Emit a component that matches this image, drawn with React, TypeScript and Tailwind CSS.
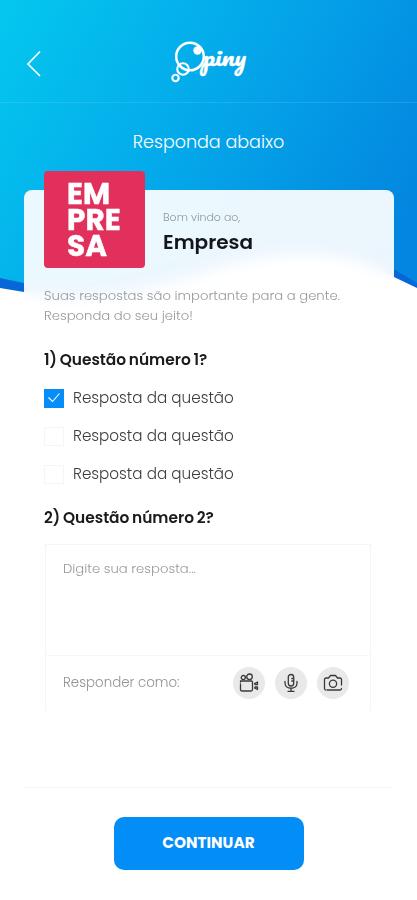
import React, { useState } from "react";

const answers = [
  { id: "a", label: "Resposta da questão" },
  { id: "b", label: "Resposta da questão" },
  { id: "c", label: "Resposta da questão" },
];

function HeroBackground() {
  return (
    <svg
      className="absolute inset-x-0 top-0 w-full h-[300px]"
      viewBox="0 0 417 300"
      preserveAspectRatio="none"
      aria-hidden="true"
    >
      <defs>
        <linearGradient
          id="sky"
          x1="0"
          y1="0"
          x2="400"
          y2="230"
          gradientUnits="userSpaceOnUse"
        >
          <stop offset="0" stopColor="#04c8ef" />
          <stop offset="0.5" stopColor="#04a8ea" />
          <stop offset="1" stopColor="#0386e0" />
        </linearGradient>
      </defs>
      <path
        d="M0 0H417V288L394 277C345 248 290 247 225 265C160 285 90 306 24 292L0 288Z"
        fill="#0567d8"
      />
      <path
        d="M0 0H417V283L394 269C345 244 290 240 225 259C160 277 90 298 24 283L0 278Z"
        fill="url(#sky)"
      />
    </svg>
  );
}

function Logo() {
  return (
    <svg
      className="w-20 h-11"
      viewBox="0 0 80 44"
      fill="none"
      stroke="white"
      role="img"
      aria-label="Opiny"
    >
      <circle cx="21" cy="16.5" r="13.8" strokeWidth="2.5" />
      <circle cx="14" cy="29" r="5.8" strokeWidth="2.1" />
      <circle cx="6.5" cy="38" r="3.2" strokeWidth="2.1" />
      <circle cx="28.5" cy="10.5" r="4.2" fill="white" stroke="none" />
      <text
        x="34"
        y="26.3"
        fill="white"
        stroke="white"
        strokeWidth="0.3"
        fontFamily="Pacifico, Lobster, 'Dancing Script', cursive"
        fontSize="22"
        textLength="43"
        lengthAdjust="spacingAndGlyphs"
      >
        piny
      </text>
    </svg>
  );
}

function Checkbox({ checked }: { checked: boolean }) {
  return (
    <span
      className={
        checked
          ? "flex items-center justify-center w-5 h-[19px] bg-[#078df7]"
          : "w-5 h-[19px] bg-white border border-[#f5f5f5]"
      }
    >
      {checked && (
        <svg
          className="w-3.5 h-3"
          viewBox="0 0 14 12"
          fill="none"
          stroke="white"
          strokeWidth={1.1}
        >
          <path d="M1.5 5.5L5.5 9.5L12.5 1.5" />
        </svg>
      )}
    </span>
  );
}

function RoundButton({
  label,
  children,
}: {
  label: string;
  children: React.ReactNode;
}) {
  return (
    <button
      className="flex items-center justify-center w-8 h-8 rounded-full bg-[#e9e9e9]"
      aria-label={label}
    >
      <svg
        className="w-5 h-5"
        viewBox="0 0 20 20"
        fill="none"
        stroke="#3a3a3a"
        strokeWidth={1.3}
        strokeLinecap="round"
        strokeLinejoin="round"
      >
        {children}
      </svg>
    </button>
  );
}

function App() {
  const [selected, setSelected] = useState(["a"]);

  const toggle = (id: string) =>
    setSelected((prev) =>
      prev.includes(id) ? prev.filter((x) => x !== id) : [...prev, id]
    );

  return (
    <div className="relative w-full h-[900px] overflow-hidden bg-white font-['Poppins','Inter',sans-serif]">
      <HeroBackground />

      <div className="relative flex flex-col h-full">
        <header className="relative flex items-start justify-center h-[103px] pt-10 border-b border-white/10">
          <button className="absolute left-[26px] top-[50px]" aria-label="Voltar">
            <svg
              className="w-4 h-7"
              viewBox="0 0 16 28"
              fill="none"
              stroke="white"
              strokeWidth={1.7}
            >
              <path d="M14 1.5L2 14L14 26" />
            </svg>
          </button>
          <Logo />
        </header>

        <h1 className="mt-[27px] h-6 text-center text-[17.5px] leading-6 font-light text-white">
          Responda abaixo
        </h1>

        <main className="mt-9 ml-6 w-[370px] h-[598px] px-5 rounded-t-lg bg-white/92 backdrop-blur-[8px] border-b border-[#f7f7f7]">
          <div className="flex -mt-[19px]">
            <div className="flex flex-col w-[101px] h-[97px] pt-2.5 pl-[23px] rounded-sm bg-[#e2305c] text-white text-[29.5px] leading-[26px] font-bold [-webkit-text-stroke:0.4px_white]">
              <span>EM</span>
              <span>PRE</span>
              <span>SA</span>
            </div>
            <div className="pt-[38px] pl-[18px]">
              <p className="text-[11px] leading-4 font-light text-[#8f969b]">
                Bom vindo ao,
              </p>
              <h2 className="mt-[3px] text-[20px] leading-7 font-semibold text-[#14171a]">
                Empresa
              </h2>
            </div>
          </div>

          <p className="mt-[18px] text-[13.2px] leading-5 font-light text-[#97999c] whitespace-nowrap">
            Suas respostas são importante para a gente.
            <br />
            Responda do seu jeito!
          </p>

          <h3 className="mt-6 text-[15.4px] leading-5 font-semibold [word-spacing:-1px] text-[#1b1b1b]">
            1) Questão número 1?
          </h3>
          <div className="flex flex-col gap-[18px] mt-[18px]">
            {answers.map((answer) => (
              <button
                key={answer.id}
                className="flex items-center gap-[9px] h-5 text-left"
                role="checkbox"
                aria-checked={selected.includes(answer.id)}
                onClick={() => toggle(answer.id)}
              >
                <Checkbox checked={selected.includes(answer.id)} />
                <span className="text-[15.2px] leading-5 font-light text-[#3c3c3c]">
                  {answer.label}
                </span>
              </button>
            ))}
          </div>

          <h3 className="mt-6 text-[15.4px] leading-5 font-semibold [word-spacing:-1px] text-[#1b1b1b]">
            2) Questão número 2?
          </h3>
          <div className="mt-4 ml-px w-[326px] h-[167px] border border-b-0 border-[#f5f5f5] bg-white/60">
            <p className="h-[111px] pt-3.5 pl-[17px] text-[13.2px] leading-5 font-light text-[#999] border-b border-[#f7f7f7]">
              Digite sua resposta...
            </p>
            <div className="flex items-center h-[53px] pl-[17px] pr-[21px]">
              <span className="pt-0.5 text-[13.4px] font-light text-[#929292]">
                Responder como:
              </span>
              <div className="flex gap-2.5 ml-auto">
                <RoundButton label="Vídeo">
                  <circle cx="4.3" cy="4.6" r="2.1" />
                  <circle cx="10.5" cy="3.8" r="2.8" />
                  <path d="M1.5 9V8H12.5Q13.5 8 13.5 9.5V16.5Q13.5 18 12 18H3Q1.5 18 1.5 16.5V11" />
                  <path d="M15.5 10.5L18.5 9V11.5H16M15.5 15L18.5 16.5V14H16" />
                </RoundButton>
                <RoundButton label="Áudio">
                  <rect x="7.3" y="1.5" width="5.4" height="11.5" rx="2.7" />
                  <path d="M4 8.5V10C4 17 16 17 16 10V8.5M10 15.5V18M7 18.3H13" />
                  <path d="M10.8 5.5H12.5M10.8 8H12.5" />
                </RoundButton>
                <RoundButton label="Foto">
                  <path d="M4 17H17Q18.5 17 18.5 15.5M18.5 12V6.5Q18.5 5 17 5H14.5L12.5 2.5H7.5L5.5 5H3Q1.5 5 1.5 6.5V15.5Q1.5 16.5 2.5 17" />
                  <circle cx="10" cy="10.8" r="3.6" />
                </RoundButton>
              </div>
            </div>
          </div>
        </main>

        <button className="self-center mt-[29px] w-[190px] h-[53px] rounded-[10px] bg-[#038df6] text-white text-[15.3px] font-bold">
          CONTINUAR
        </button>
      </div>
    </div>
  );
}

export default App;
